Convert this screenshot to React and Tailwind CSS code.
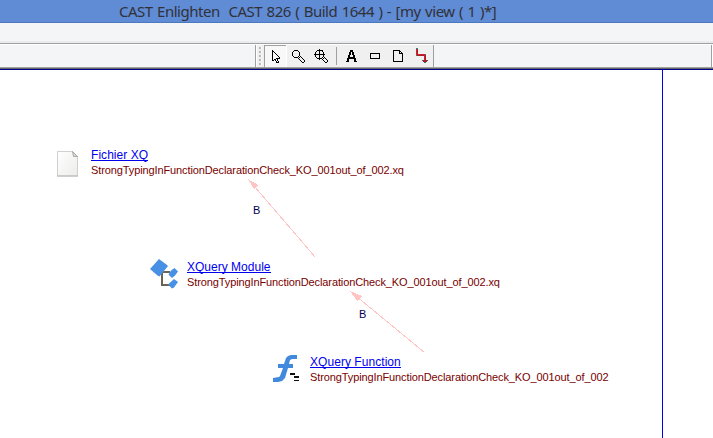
import React from "react";

function Toolbar() {
  return (
    <div className="flex h-[23px] bg-[#f4f5f7]">
      <div className="w-[255px] shrink-0" />
      <div className="flex w-[179px] shrink-0 border-x border-[#a0a0a0] bg-[#f0f0f0]">
        <svg width="8" height="23" shapeRendering="crispEdges" className="shrink-0">
          <path d="M0 0h1v23h-1z" fill="#fff" />
          {[3, 7, 11, 15, 19].map((y) => (
            <g key={y}>
              <path d={`M4 ${y - 1}h2v2h-2z`} fill="#fff" />
              <path d={`M3 ${y - 1}h2v2h-2z`} fill="#b8b8b8" />
            </g>
          ))}
        </svg>
        <svg width="168" height="23" viewBox="264 45 168 23" shapeRendering="crispEdges" className="shrink-0">
          <path d="M264 45h23v22h-23z" fill="#f8f8f8" />
          <path d="M264 45h22v1h-21v21h-1z" fill="#a0a0a0" />
          <path d="M286 45v22h-22" fill="none" stroke="#fff" />
          <g fill="#000">
            <path d="M272 50h1v11h-1zM273 51h1v1h-1zM274 52h1v1h-1zM275 53h1v1h-1zM276 54h1v1h-1zM277 55h1v1h-1zM278 56h1v1h-1zM279 57h1v1h-1zM276 58h4v1h-4zM273 60h1v1h-1zM274 59h1v1h-1zM275 59h1v2h-1zM276 61h1v2h-1zM277 59h1v2h-1zM278 61h1v2h-1zM277 62h1v1h-1z" />
            <path d="M294 50h4v1h-4zM293 51h1v1h-1zM298 51h1v1h-1zM292 52h1v4h-1zM299 52h1v4h-1zM293 56h1v1h-1zM298 56h1v1h-1zM294 57h4v1h-4z" />
            <path d="M300 56h1v1h-1zM301 57h1v1h-1zM302 58h1v1h-1zM303 59h1v1h-1zM304 60h1v1h-1zM298 58h1v1h-1zM299 59h1v1h-1zM300 60h1v1h-1zM301 61h1v1h-1zM302 62h2v1h-2zM304 61h1v1h-1zM299 57h1v1h-1z" />
            <path d="M317 50h6v1h-6zM316 51h1v1h-1zM322 51h1v1h-1zM315 52h1v5h-1zM323 52h1v5h-1zM316 57h1v1h-1zM322 57h1v1h-1zM317 58h5v1h-5zM319 49h1v11h-1zM314 54h11v1h-11z" />
            <path d="M324 57h1v1h-1zM325 58h1v1h-1zM326 59h1v1h-1zM327 60h1v1h-1zM322 59h1v1h-1zM323 60h1v1h-1zM324 61h1v1h-1zM325 62h2v1h-2zM327 61h1v1h-1zM323 58h1v1h-1z" />
            <path d="M350 50h3v2h-3zM349 52h2v3h-2zM352 52h2v3h-2zM348 55h2v3h-2zM353 55h2v3h-2zM349 57h5v2h-5zM347 58h2v3h-2zM354 58h2v3h-2zM346 61h3v1h-3zM354 61h3v1h-3z" />
          </g>
          <path d="M336 47h1v18h-1z" fill="#a0a0a0" />
          <rect x="370.5" y="53.5" width="9" height="5" fill="none" stroke="#000" />
          <path d="M393.5 50.5h6l3 3v8h-9zM399.5 50.5v3h3" fill="none" stroke="#000" />
          <path d="M416 49h1v5h8v6h-1v-5h-8z" fill="#d51d28" />
          <path d="M417 49h1v5h-1zM417 55h7v1h-7zM425 55h1v5h-1z" fill="#a52028" />
          <path d="M416 48h2v1h-2zM416 55h1v1h-1zM425 54h1v1h-1z" fill="#318b8b" />
          <path d="M422 60h6v1h-1v1h-1v1h-2v-1h-1v-1h-1z" fill="#b51925" />
          <path d="M422 60h1v1h-1zM427 60h1v1h-1zM424 62h2v1h-2z" fill="#247b7b" />
        </svg>
      </div>
      <div className="w-[277px] shrink-0" />
      <div className="w-px shrink-0 bg-[#a0a0a0]" />
      <div className="w-px bg-white" />
    </div>
  );
}

function Labels({ title, sub, titleClass }) {
  return (
    <div className="flex flex-col items-start whitespace-nowrap">
      <div className={`h-[13px] border-b border-[#0000ee] text-[12px] leading-[14px] text-[#0000ee] ${titleClass}`}>{title}</div>
      <div className="mt-[2px] text-[11px] leading-[14px] tracking-[-0.11px] text-[#790000]">{sub}</div>
    </div>
  );
}

export default function App() {
  return (
    <div className="flex h-[438px] w-[713px] flex-col overflow-hidden bg-white font-['Liberation_Sans',Arial,sans-serif]">
      <header className="h-[23px] shrink-0 border-b border-[#4c78bd] bg-[#608bd5] pl-[119px] font-['Noto_Sans',sans-serif] text-[15px] leading-[23px] tracking-[-0.49px] [word-spacing:1px] whitespace-pre text-[#303238]">
        CAST Enlighten  CAST 826 ( Build 1644 ) - [my view ( 1 )*]
      </header>
      <div className="h-[18px] shrink-0 bg-[#f4f5f7]" />
      <div className="h-[2px] shrink-0 bg-[#eaebec]" />
      <div className="h-px shrink-0 bg-[#a0a0a0]" />
      <div className="h-px shrink-0 bg-white" />
      <Toolbar />
      <div className="-mt-px h-px shrink-0 bg-[#a0a0a0]" />
      <div className="h-px shrink-0 bg-[#656565]" />
      <div className="h-px shrink-0 bg-[#000090]" />
      <main className="relative flex-1">
        <div className="absolute top-0 left-[662px] h-full w-px bg-[#0000f0]" />
        <svg width="713" height="368" viewBox="0 70 713 368" className="absolute top-0 left-0">
          <g stroke="#ffc4c4" fill="#ffc4c4" shapeRendering="crispEdges">
            <path d="M248.5 179.5L315.5 257.5" />
            <path d="M350.5 291.5L424.500 352.5" />
            <path d="M248 179l10 6-4 4zM350 291l12 5-5 5z" stroke="none" />
          </g>
          <defs>
            <linearGradient id="paper" x1="0" y1="0" x2="1" y2="1">
              <stop stopColor="#fff" />
              <stop offset="1" stopColor="#ececea" />
            </linearGradient>
          </defs>
          <path d="M57.5 151.5h15l5 5v19.5h-20z" fill="url(#paper)" stroke="#d0d0ce" />
          <path d="M57 176h21" stroke="#b5b5b3" />
          <path d="M72.5 151.5l5 5h-4z" fill="#dadad8" stroke="#999" strokeWidth=".8" />
          <g>
            <path d="M161 272h9M162 272v13h8" fill="none" stroke="#6c6353" strokeWidth="2" />
            <path d="M159 259l8 6 1 1-8.500 10.500-2-1-7.500-6.500z" fill="#4790e3" />
            <path d="M174.5 268l3.500 3.500-3 4-3 2.500-3.500-3.500 2.500-4z" fill="#4790e3" />
            <path d="M174 279l4 3-4 5.500-2 1-4-4z" fill="#4790e3" />
          </g>
          <path d="M297 355v4h-5l-2 1-1 4h4v4h-5l-3 10-3 3-4 1h-5v-4l6-1 1-1 3-8h-5v-4h6l2-6 2-2 3-1z" fill="#4089dc" />
          <path d="M290 373h5v2h-5zM294 376h5v2h-5zM294 380h5v1h-5z" fill="#111" shapeRendering="crispEdges" />
        </svg>
        <div className="absolute top-[78px] left-[91px]">
          <Labels title="Fichier XQ" sub="StrongTypingInFunctionDeclarationCheck_KO_001out_of_002.xq" titleClass="tracking-[0.05px]" />
        </div>
        <div className="absolute top-[190px] left-[187px]">
          <Labels title="XQuery Module" sub="StrongTypingInFunctionDeclarationCheck_KO_001out_of_002.xq" titleClass="tracking-[0.01px]" />
        </div>
        <div className="absolute top-[285px] left-[310px]">
          <Labels title="XQuery Function" sub="StrongTypingInFunctionDeclarationCheck_KO_001out_of_002" titleClass="tracking-[0.05px]" />
        </div>
        <div className="absolute top-[133px] left-[253px] text-[11px] leading-[14px] text-[#000050]">B</div>
        <div className="absolute top-[237px] left-[359px] text-[11px] leading-[14px] text-[#000050]">B</div>
      </main>
    </div>
  );
}
